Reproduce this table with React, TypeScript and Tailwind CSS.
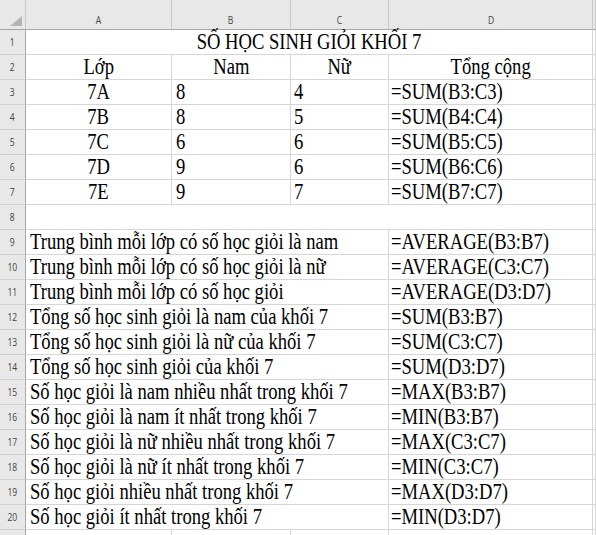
const classes = [
  ['7A', '8', '4', '=SUM(B3:C3)'],
  ['7B', '8', '5', '=SUM(B4:C4)'],
  ['7C', '6', '6', '=SUM(B5:C5)'],
  ['7D', '9', '6', '=SUM(B6:C6)'],
  ['7E', '9', '7', '=SUM(B7:C7)'],
]

const summary = [
  ['Trung bình mỗi lớp có số học giỏi là nam', '=AVERAGE(B3:B7)'],
  ['Trung bình mỗi lớp có số học giỏi là nữ', '=AVERAGE(C3:C7)'],
  ['Trung bình mỗi lớp có số học giỏi', '=AVERAGE(D3:D7)'],
  ['Tổng số học sinh giỏi là nam của khối 7', '=SUM(B3:B7)'],
  ['Tổng số học sinh giỏi là nữ của khối 7', '=SUM(C3:C7)'],
  ['Tổng số học sinh giỏi của khối 7', '=SUM(D3:D7)'],
  ['Số học giỏi là nam nhiều nhất trong khối 7', '=MAX(B3:B7)'],
  ['Số học giỏi là nam ít nhất trong khối 7', '=MIN(B3:B7)'],
  ['Số học giỏi là nữ nhiều nhất trong khối 7', '=MAX(C3:C7)'],
  ['Số học giỏi là nữ ít nhất trong khối 7', '=MIN(C3:C7)'],
  ['Số học giỏi nhiều nhất trong khối 7', '=MAX(D3:D7)'],
  ['Số học giỏi ít nhất trong khối 7', '=MIN(D3:D7)'],
]

const cell = 'border-b border-r border-[#d6d6d6] whitespace-nowrap leading-[22px]'
const head = "bg-[#e8e8e8] text-[11px] leading-[12px] text-[#444] [font-family:'Open_Sans','Noto_Sans',sans-serif]"

// the sheet was captured a little squashed sideways, so text is narrowed to match
function Squash({ children, center }: { children: React.ReactNode; center?: boolean }) {
  return (
    <span className={`inline-block scale-x-[0.775] ${center ? 'origin-center' : 'origin-left'}`}>{children}</span>
  )
}

function RowHead({ n }: { n?: number }) {
  return (
    <div className={`flex items-center justify-center border-b border-r border-b-[#d0d0d0] border-r-[#a6a6a6] ${head}`}>
      <Squash center>{n}</Squash>
    </div>
  )
}

export default function App() {
  return (
    <div className="relative h-[535px] w-[596px] overflow-hidden bg-white">
      <div className="grid grid-cols-[26px_146px_119px_98px_204px_1fr] grid-rows-[30px] auto-rows-[25px] text-[24px] text-black [font-family:'Liberation_Serif','Times_New_Roman',serif]">
        {/* column headers */}
        <div className={`relative border-b border-r border-b-[#a6a6a6] border-r-[#c8c8c8] ${head}`}>
          <div className="absolute bottom-[3px] right-[3px] h-0 w-0 border-l-[12px] border-t-[10px] border-l-transparent border-t-transparent border-b-0 border-r-[0px] [border-bottom:10px_solid_#b4b4b4]" />
        </div>
        {['A', 'B', 'C', 'D', ''].map((letter) => (
          <div
            key={letter || 'E'}
            className={`flex items-end justify-center border-b border-r border-b-[#a6a6a6] border-r-[#c8c8c8] pb-[3px] ${head}`}
          >
            <Squash center>{letter}</Squash>
          </div>
        ))}

        {/* row 1 title */}
        <RowHead n={1} />
        <div className={`${cell} col-span-4 text-center`}>
          <Squash center>SỐ HỌC SINH GIỎI KHỐI 7</Squash>
        </div>
        <div className={cell} />

        {/* row 2 headings */}
        <RowHead n={2} />
        <div className={`${cell} text-center`}><Squash center>Lớp</Squash></div>
        <div className={`${cell} text-center`}><Squash center>Nam</Squash></div>
        <div className={`${cell} text-center`}><Squash center>Nữ</Squash></div>
        <div className={`${cell} text-center`}><Squash center>Tổng cộng</Squash></div>
        <div className={cell} />

        {classes.map((row, i) => (
          <div key={row[0]} className="contents">
            <RowHead n={i + 3} />
            <div className={`${cell} text-center`}><Squash center>{row[0]}</Squash></div>
            <div className={`${cell} pl-[4px]`}><Squash>{row[1]}</Squash></div>
            <div className={`${cell} pl-[3px]`}><Squash>{row[2]}</Squash></div>
            <div className={`${cell} pl-[2px]`}><Squash>{row[3]}</Squash></div>
            <div className={cell} />
          </div>
        ))}

        {/* row 8 empty */}
        <RowHead n={8} />
        <div className={`${cell} col-span-4`} />
        <div className={cell} />

        {summary.map((row, i) => (
          <div key={row[0]} className="contents">
            <RowHead n={i + 9} />
            <div className={`${cell} col-span-3 pl-[4px]`}><Squash>{row[0]}</Squash></div>
            <div className={`${cell} pl-[2px]`}><Squash>{row[1]}</Squash></div>
            <div className={cell} />
          </div>
        ))}

        {/* row 21, only its top edge shows */}
        <RowHead />
        <div className={cell} />
        <div className={cell} />
        <div className={cell} />
        <div className={cell} />
        <div className={cell} />
      </div>
    </div>
  )
}
